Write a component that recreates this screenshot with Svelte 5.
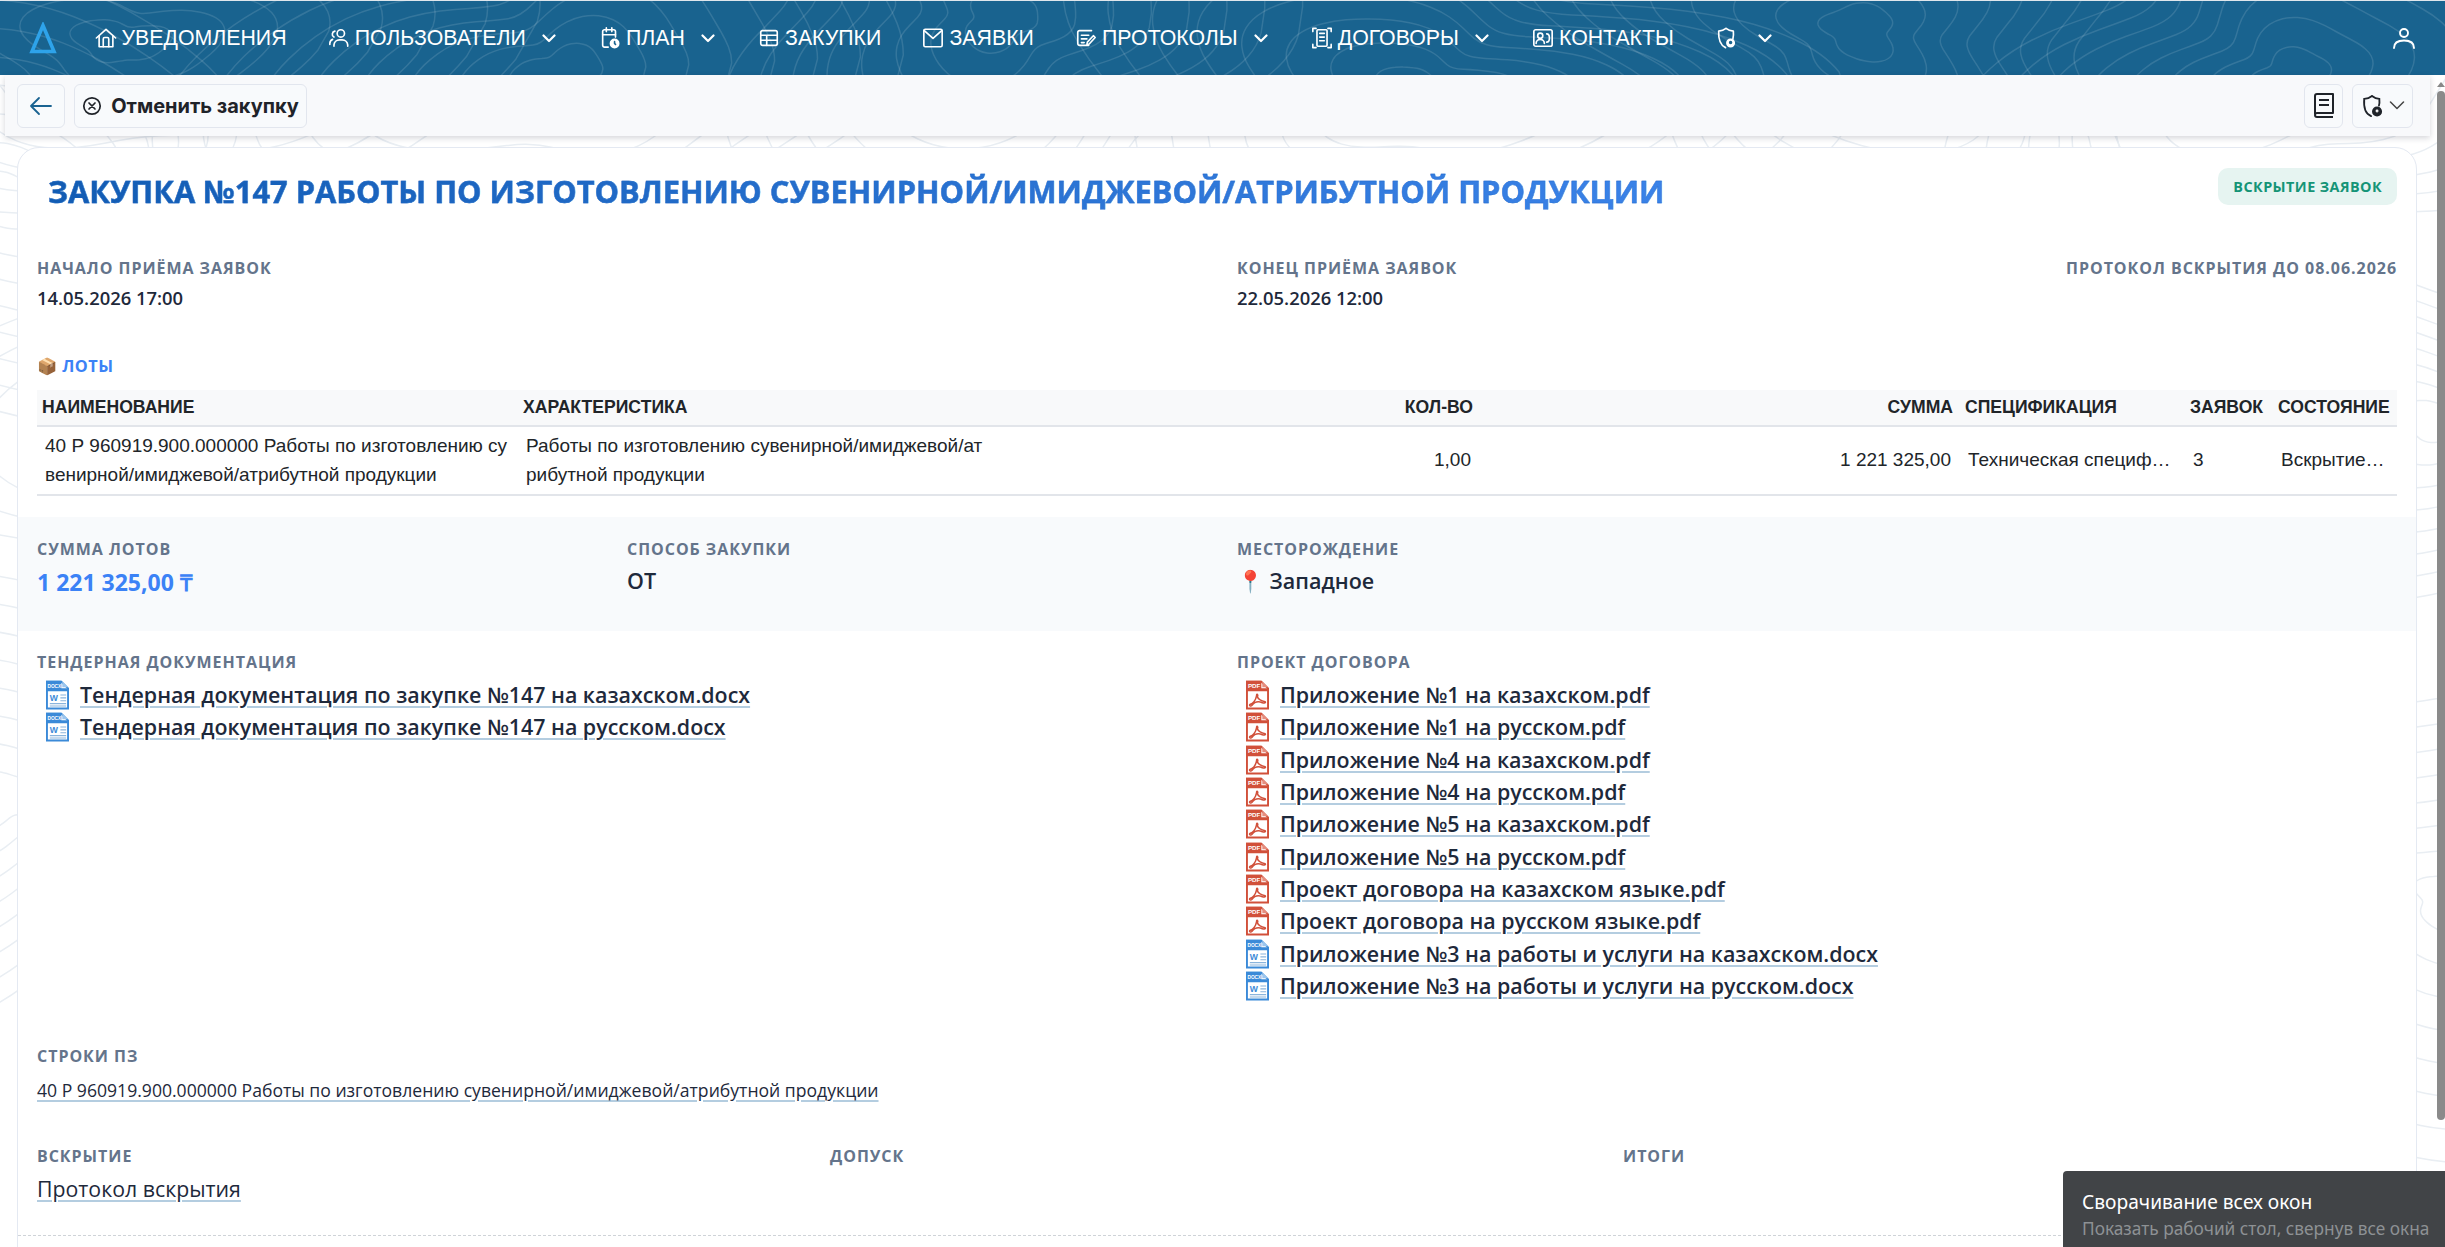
<script>
	// contour lines behind the navbar and the page
	function ring(cx, cy, r, seed) {
		const pts = [];
		for (let i = 0; i < 40; i++) {
			const a = (i / 40) * Math.PI * 2;
			const k = 1 + 0.22 * Math.sin(2 * a + seed) + 0.14 * Math.sin(3 * a + seed * 2) + 0.07 * Math.sin(5 * a + seed * 3);
			pts.push([cx + Math.cos(a) * r * k * 1.35, cy + Math.sin(a) * r * k * 0.8]);
		}
		let d = '';
		pts.forEach((p, i) => {
			const n = pts[(i + 1) % pts.length];
			const mid = [(p[0] + n[0]) / 2, (p[1] + n[1]) / 2];
			d += i === 0 ? `M${mid[0].toFixed(1)} ${mid[1].toFixed(1)}` : `Q${p[0].toFixed(1)} ${p[1].toFixed(1)} ${mid[0].toFixed(1)} ${mid[1].toFixed(1)}`;
		});
		return d + 'Z';
	}

	const hills = [
		[120, 40, 1.2], [560, 70, 2.6], [1000, 20, 4.1], [1420, 90, 0.7], [1860, 30, 5.2], [2290, 75, 3.3],
		[300, 420, 2.1], [2440, 420, 1.5], [0, 800, 3.7], [2450, 900, 4.6], [0, 200, 5.5]
	];
	const contours = [];
	for (const [x, y, s] of hills) {
		for (let r = 30; r < 260; r += 30) contours.push(ring(x, y, r, s));
	}

	const navItems = [
		{ icon: 'home', label: 'Уведомления' },
		{ icon: 'users', label: 'Пользователи', more: true },
		{ icon: 'plan', label: 'План', more: true },
		{ icon: 'table', label: 'Закупки' },
		{ icon: 'mail', label: 'Заявки' },
		{ icon: 'forms', label: 'Протоколы', more: true },
		{ icon: 'scan', label: 'Договоры', more: true },
		{ icon: 'contact', label: 'Контакты' },
		{ icon: 'shield', label: '', more: true }
	];

	const lotColumns = [
		{ label: 'Наименование', width: 481 },
		{ label: 'Характеристика', width: 476 },
		{ label: 'Кол-во', width: 486, right: true },
		{ label: 'Сумма', width: 480, right: true },
		{ label: 'Спецификация', width: 225 },
		{ label: 'Заявок', width: 88 },
		{ label: 'Состояние', width: 124 }
	];
	const lotCells = [
		'40 Р 960919.900.000000 Работы по изготовлению сувенирной/имиджевой/атрибутной продукции',
		'Работы по изготовлению сувенирной/имиджевой/атрибутной продукции',
		'1,00',
		'1 221 325,00',
		'Техническая спецификация',
		'3',
		'Вскрытие заявок'
	];

	const tenderDocs = [
		{ type: 'doc', name: 'Тендерная документация по закупке №147 на казахском.docx' },
		{ type: 'doc', name: 'Тендерная документация по закупке №147 на русском.docx' }
	];
	const contractDocs = [
		{ type: 'pdf', name: 'Приложение №1 на казахском.pdf' },
		{ type: 'pdf', name: 'Приложение №1 на русском.pdf' },
		{ type: 'pdf', name: 'Приложение №4 на казахском.pdf' },
		{ type: 'pdf', name: 'Приложение №4 на русском.pdf' },
		{ type: 'pdf', name: 'Приложение №5 на казахском.pdf' },
		{ type: 'pdf', name: 'Приложение №5 на русском.pdf' },
		{ type: 'pdf', name: 'Проект договора на казахском языке.pdf' },
		{ type: 'pdf', name: 'Проект договора на русском языке.pdf' },
		{ type: 'doc', name: 'Приложение №3 на работы и услуги на казахском.docx' },
		{ type: 'doc', name: 'Приложение №3 на работы и услуги на русском.docx' }
	];
</script>

{#snippet topo()}
	<svg class="topo" width="2445" height="1247" viewBox="0 0 2445 1247" fill="none" aria-hidden="true">
		{#each contours as d}
			<path {d} />
		{/each}
	</svg>
{/snippet}

{#snippet chevron()}
	<svg class="chev" width="14" height="9" viewBox="0 0 14 9" fill="none"><path d="M1.5 1.5 7 7l5.5-5.5" stroke="currentColor" stroke-width="2.2" stroke-linecap="round" stroke-linejoin="round" /></svg>
{/snippet}

{#snippet navIcon(name)}
	<svg width="22" height="24" viewBox="0 0 24 24" fill="none" stroke="currentColor" stroke-width="1.8" stroke-linecap="round" stroke-linejoin="round">
		{#if name === 'home'}
			<path d="M1.5 12 12 2.5 22.5 12" /><path d="M4.5 10v11.500h15V10" /><path d="M9 21.500v-8.500a1.500 1.500 0 0 1 1.500-1.500h3A1.500 1.500 0 0 1 15 13v8.500" />
		{:else if name === 'users'}
			<circle cx="14" cy="7" r="4" /><path d="M6.500 21v-1.500A6 6 0 0 1 12.500 14h3a6 6 0 0 1 6 5.500V21" /><path d="M7.500 4.500a3.500 3.500 0 0 0-1 6.500" /><path d="M2 19v-1a5 5 0 0 1 3-4.500" />
		{:else if name === 'plan'}
			<path d="M10 22H6a2 2 0 0 1-2-2V5a2 2 0 0 1 2-2h10a2 2 0 0 1 2 2v6" /><path d="M8 1v4M14 1v4M4 8.500h14" /><circle cx="17" cy="18" r="4.500" fill="currentColor" /><path d="M17 16v2l1 1" stroke="#19638f" />
		{:else if name === 'table'}
			<rect x="3" y="4" width="18" height="16" rx="2" /><path d="M3 9h18M3 14.500h18M9.500 9v11" />
		{:else if name === 'mail'}
			<rect x="2" y="2.500" width="20" height="19" rx="1.500" /><path d="m2.500 4 9.500 8.500L21.500 4" />
		{:else if name === 'forms'}
			<path d="M15 20H5a2 2 0 0 1-2-2V6a2 2 0 0 1 2-2h13" /><path d="M7 9h8M7 13h6M7 17h3" /><path d="m13 19 .5-2.500L20 9.500l2 2-6.500 7z" />
		{:else if name === 'scan'}
			<path d="M2 5V1.500h3.500M18.500 1.500H22V5M22 19v3.500h-3.500M5.500 22.500H2V19" /><rect x="6.500" y="3" width="11" height="18" rx="1" /><path d="M9.500 7h5M9.500 11h5M9.500 15h5" />
		{:else if name === 'contact'}
			<rect x="2" y="3" width="20" height="18" rx="2" /><circle cx="9" cy="9.500" r="2.800" /><path d="M4.500 18a4.500 4.500 0 0 1 9 0" /><path d="M16 7.500c2 0 3 1.500 3 4.500s-1 4.500-3 4.500" />
		{:else if name === 'shield'}
			<path d="M12 1.500c2.500 2 5 2.800 8 3 .4 3.500.2 6-.5 8.500M11.500 22.500C7 20.500 3.500 16 4 4.500c3-.2 5.500-1 8-3" /><circle cx="17" cy="17.500" r="4" fill="currentColor" /><circle cx="17" cy="17" r="1" stroke="#19638f" />
		{/if}
	</svg>
{/snippet}

{#snippet fileIcon(type)}
	{#if type === 'pdf'}
		<svg class="file" width="23" height="30" viewBox="0 0 24 30">
			<path d="M1 1h15l7 7v21H1z" fill="#fff" stroke="#d1503a" stroke-width="2" />
			<path d="M0 0h16v8h8v3H0z" fill="#d1503a" />
			<path d="M17 1l6 6h-6z" fill="#e58e7e" />
			<text x="2" y="8" class="file-tag">PDF</text>
			<path d="M4 25c3-1 6-4 7-9 0-3 2-2 1 1 1 3 4 4 8 5 1 1-1 2-3 1-5-2-8-1-11 3-1 1-3 0-2-1z" fill="none" stroke="#d1503a" stroke-width="1.600" />
		</svg>
	{:else}
		<svg class="file" width="23" height="30" viewBox="0 0 24 30">
			<path d="M1 1h15l7 7v21H1z" fill="#fff" stroke="#3b8ad8" stroke-width="2" />
			<path d="M0 0h16v8h8v3H0z" fill="#3b8ad8" />
			<path d="M17 1l6 6h-6z" fill="#9cc6ee" />
			<text x="1.500" y="8" class="file-tag small">DOCX</text>
			<text x="4" y="21" class="file-w">W</text>
			<path d="M15 15h6M15 18h6M15 21h6M4 24h17M4 26.500h17" stroke="#8ab4dc" stroke-width="1.200" />
		</svg>
	{/if}
{/snippet}

{#snippet docList(docs)}
	<ul class="docs">
		{#each docs as doc}
			<li>
				{@render fileIcon(doc.type)}
				<a href="#top" class="doc-link">{doc.name}</a>
			</li>
		{/each}
	</ul>
{/snippet}

<div class="page">
	<div class="page-bg">{@render topo()}</div>

	<nav class="navbar">
		{@render topo()}
		<svg class="logo" width="28" height="32" viewBox="0 0 28 32" fill="none"><path d="M14 3.500 3 29.500h22z" stroke="#2ea3ea" stroke-width="3.600" stroke-linejoin="miter" /></svg>
		<ul class="nav-list">
			{#each navItems as item}
				<li class="nav-item" class:icon-only={!item.label}>
					{@render navIcon(item.icon)}
					{#if item.label}<span>{item.label}</span>{/if}
					{#if item.more}{@render chevron()}{/if}
				</li>
			{/each}
		</ul>
		<svg class="avatar" width="24" height="24" viewBox="0 0 24 24" fill="none" stroke="currentColor" stroke-width="1.900" stroke-linecap="round"><circle cx="12" cy="7" r="4" /><path d="M2 22c0-5 4-7.500 10-7.500S22 17 22 22" /></svg>
	</nav>

	<div class="toolbar">
		<button class="tool back" aria-label="Назад">
			<svg width="24" height="20" viewBox="0 0 24 20" fill="none" stroke="#1a6391" stroke-width="1.800" stroke-linecap="round" stroke-linejoin="round"><path d="M22 10H2M10 2l-8 8 8 8" /></svg>
		</button>
		<button class="tool cancel">
			<svg width="20" height="20" viewBox="0 0 20 20" fill="none" stroke="#1f2329" stroke-width="1.700" stroke-linecap="round"><circle cx="10" cy="10" r="8.200" /><path d="m7 7 6 6M13 7l-6 6" /></svg>
			Отменить закупку
		</button>
		<div class="spacer"></div>
		<button class="tool book" aria-label="Справка">
			<svg width="22" height="26" viewBox="0 0 22 26" fill="none" stroke="#1f2329" stroke-width="2" stroke-linejoin="round"><path d="M2 21V3a2 2 0 0 1 2-2h16v19H4a2 2 0 0 0-2 2 2 2 0 0 0 2 2h16" /><path d="M6 7h10M6 12h10" /></svg>
		</button>
		<button class="tool lang" aria-label="Роль">
			<svg width="22" height="26" viewBox="0 0 24 26" fill="none" stroke="#1f2329" stroke-width="2" stroke-linecap="round"><path d="M12 2c2.500 2 5 3 8 3.200.3 3 .2 5.300-.4 7.300M11 24C6 22 2.500 17 3.500 5.200c3-.2 6-1.200 8.500-3.200" /><circle cx="17.500" cy="19" r="4.500" fill="#1f2329" /><circle cx="17.500" cy="18.500" r="1" stroke="#fff" stroke-width="1.200" /></svg>
			<svg width="16" height="9" viewBox="0 0 16 9" fill="none" stroke="#444" stroke-width="1.500" stroke-linecap="round" stroke-linejoin="round"><path d="m1.500 1 6.500 6.500L14.500 1" /></svg>
		</button>
	</div>

	<main class="card">
		<header class="card-head">
			<h1>Закупка №147 Работы по изготовлению сувенирной/имиджевой/атрибутной продукции</h1>
			<span class="badge">Вскрытие заявок</span>
		</header>

		<section class="dates">
			<div>
				<div class="label">Начало приёма заявок</div>
				<div class="date">14.05.2026 17:00</div>
			</div>
			<div>
				<div class="label">Конец приёма заявок</div>
				<div class="date">22.05.2026 12:00</div>
			</div>
			<div class="label deadline">Протокол вскрытия до 08.06.2026</div>
		</section>

		<section class="lots">
			<div class="lots-title"><span class="emoji">📦</span> Лоты</div>
			<table>
				<colgroup>
					{#each lotColumns as col}
						<col style="width: {col.width}px" />
					{/each}
				</colgroup>
				<thead>
					<tr>
						{#each lotColumns as col}
							<th class:right={col.right}>{col.label}</th>
						{/each}
					</tr>
				</thead>
				<tbody>
					<tr>
						{#each lotCells as cell, i}
							<td class:right={lotColumns[i].right} class:wrap={i < 2}>{cell}</td>
						{/each}
					</tr>
				</tbody>
			</table>
		</section>

		<section class="summary">
			<div>
				<div class="label">Сумма лотов</div>
				<div class="total">1 221 325,00 ₸</div>
			</div>
			<div>
				<div class="label">Способ закупки</div>
				<div class="value">ОТ</div>
			</div>
			<div>
				<div class="label">Месторождение</div>
				<div class="value"><span class="emoji">📍</span> Западное</div>
			</div>
		</section>

		<section class="documents">
			<div>
				<div class="label">Тендерная документация</div>
				{@render docList(tenderDocs)}
			</div>
			<div>
				<div class="label">Проект договора</div>
				{@render docList(contractDocs)}
			</div>
		</section>

		<section class="pz">
			<div class="label">Строки ПЗ</div>
			<a href="#top" class="pz-link">40 Р 960919.900.000000 Работы по изготовлению сувенирной/имиджевой/атрибутной продукции</a>
		</section>

		<section class="stages">
			<div>
				<div class="label">Вскрытие</div>
				<a href="#top" class="stage-link">Протокол вскрытия</a>
			</div>
			<div class="label">Допуск</div>
			<div class="label">Итоги</div>
		</section>

		<div class="divider"></div>
	</main>

	<div class="scrollbar">
		<span class="arrow"></span>
		<span class="thumb"></span>
	</div>

	<div class="tooltip">
		<div class="tip-title">Сворачивание всех окон</div>
		<div class="tip-text">Показать рабочий стол, свернув все окна</div>
	</div>
</div>

<style>
	:global(body) {
		margin: 0;
		background: #fff;
	}

	.page {
		position: relative;
		height: 1247px;
		overflow: hidden;
		font-family: 'Open Sans', sans-serif;
		color: #1e293b;
	}

	.page-bg {
		position: absolute;
		inset: 0;
	}

	.page-bg :global(.topo path) {
		stroke: #e9eef3;
		stroke-width: 1.5;
	}

	.navbar {
		position: relative;
		height: 75px;
		box-sizing: border-box;
		display: flex;
		align-items: center;
		padding-left: 29px;
		background: #19638f;
		border-top: 1px solid #dfe6ec;
		color: #fff;
		overflow: hidden;
		font-family: 'Liberation Sans', sans-serif;
	}

	.topo {
		position: absolute;
		left: 0;
		top: 0;
	}

	.navbar :global(.topo path) {
		stroke: rgba(255, 255, 255, 0.12);
		stroke-width: 1.5;
	}

	.logo {
		position: relative;
		flex: none;
	}

	.nav-list {
		position: relative;
		display: flex;
		align-items: center;
		list-style: none;
		margin: 0 0 0 17px;
		padding: 0;
	}

	.nav-item {
		display: flex;
		align-items: center;
		gap: 5px;
		padding: 0 20.6px;
		font-size: 21.3px;
		text-transform: uppercase;
		white-space: nowrap;
	}

	.nav-item :global(.chev) {
		margin-left: 11px;
		margin-right: 2px;
	}

	.nav-item.icon-only :global(.chev) {
		margin-left: 16px;
	}

	.avatar {
		position: absolute;
		right: 29px;
		top: 25px;
	}

	.toolbar {
		position: relative;
		display: flex;
		align-items: center;
		gap: 9px;
		height: 61px;
		margin: 0 15px 0 5px;
		padding: 0 17px 0 12px;
		background: #f8f9fb;
		box-shadow: 0 2px 6px rgba(15, 23, 42, 0.18);
	}

	.spacer {
		flex: 1;
	}

	.tool {
		display: inline-flex;
		align-items: center;
		justify-content: center;
		gap: 9px;
		height: 44px;
		padding: 0;
		background: #f8fafc;
		border: 1px solid #e2e6ee;
		border-radius: 6px;
		font-family: Inter, sans-serif;
		font-size: 20px;
		font-weight: 700;
		color: #1f2329;
	}

	.back {
		width: 48px;
	}

	.cancel {
		width: 233px;
	}

	.book {
		width: 39px;
	}

	.lang {
		width: 61px;
		gap: 6px;
	}

	.card {
		position: relative;
		margin: 11px 28px 0 17px;
		background: #fff;
		border: 1px solid #e4e9f2;
		border-radius: 22px;
		height: 1200px;
	}

	.card-head {
		display: flex;
		justify-content: space-between;
		align-items: flex-start;
		box-sizing: border-box;
		padding: 20px 19px 0 30px;
		height: 80px;
	}

	h1 {
		margin: 0;
		font-size: 30.8px;
		line-height: 47px;
		font-weight: 700;
		text-transform: uppercase;
		white-space: nowrap;
		background: linear-gradient(90deg, #125cb3, #3a82e8);
		-webkit-background-clip: text;
		background-clip: text;
		color: transparent;
		-webkit-text-stroke: 0.4px rgba(25, 105, 200, 0.8);
	}

	.badge {
		display: flex;
		align-items: center;
		height: 37px;
		padding: 0 15px;
		background: #e6f4f1;
		border-radius: 10px;
		font-size: 14.4px;
		font-weight: 700;
		letter-spacing: 0.03em;
		color: #159477;
		text-transform: uppercase;
	}

	.label {
		font-size: 16px;
		line-height: 20px;
		font-weight: 700;
		letter-spacing: 0.06em;
		color: #64748b;
		text-transform: uppercase;
	}

	.dates {
		display: grid;
		grid-template-columns: 1200px 1fr auto;
		padding: 30px 19px 0;
	}

	.date {
		margin-top: 8px;
		font-size: 18.4px;
		line-height: 24px;
		font-weight: 600;
		color: #1e293b;
	}

	.lots {
		padding: 45px 19px 0;
	}

	.lots-title {
		font-size: 16.3px;
		line-height: 22px;
		font-weight: 700;
		letter-spacing: 0.03em;
		color: #3b82f6;
		text-transform: uppercase;
	}

	table {
		width: 2360px;
		margin-top: 13px;
		border-collapse: collapse;
		table-layout: fixed;
		font-family: 'Liberation Sans', sans-serif;
	}

	th {
		height: 35px;
		padding: 0 5px;
		background: #f8f9fa;
		border-bottom: 2px solid #e2e5ea;
		font-size: 17.6px;
		font-weight: 700;
		color: #212529;
		text-align: left;
		text-transform: uppercase;
		white-space: nowrap;
		overflow: hidden;
	}

	td {
		padding: 2px 8px 5px;
		border-bottom: 2px solid #e2e5ea;
		font-size: 19px;
		line-height: 29px;
		color: #212529;
		white-space: nowrap;
		overflow: hidden;
		text-overflow: ellipsis;
	}

	td.wrap {
		padding-top: 4px;
		white-space: normal;
		word-break: break-all;
	}

	th.right {
		padding-right: 7px;
		text-align: right;
	}

	td.right {
		padding-right: 9px;
		text-align: right;
	}

	.summary {
		display: grid;
		grid-template-columns: 590px 610px 1fr;
		height: 114px;
		box-sizing: border-box;
		margin-top: 21px;
		padding: 22px 19px 0;
		background: #f8fafc;
	}

	.total {
		margin-top: 8px;
		font-size: 23px;
		line-height: 30px;
		font-weight: 700;
		color: #3b82f6;
	}

	.value {
		margin-top: 8px;
		font-size: 21.5px;
		line-height: 28px;
		font-weight: 600;
		color: #1e293b;
	}

	.documents {
		display: grid;
		grid-template-columns: 1200px 1fr;
		padding: 21px 19px 0;
		height: 415px;
		box-sizing: border-box;
	}

	.docs {
		list-style: none;
		margin: 7px 0 0;
		padding: 0;
	}

	.docs li {
		display: flex;
		align-items: center;
		height: 32.3px;
		padding-left: 9px;
		gap: 11px;
	}

	.file {
		flex: none;
	}

	.file-tag {
		font-family: 'Liberation Sans', sans-serif;
		font-size: 6.5px;
		font-weight: 700;
		fill: #fff;
	}

	.file-tag.small {
		font-size: 5px;
	}

	.file-w {
		font-family: 'Liberation Sans', sans-serif;
		font-size: 9px;
		font-weight: 700;
		fill: #3b8ad8;
	}

	.doc-link {
		font-size: 21.4px;
		line-height: 28px;
		font-weight: 600;
		color: #1e293b;
		text-decoration: underline;
		text-decoration-color: #b4cde0;
		text-decoration-thickness: 2px;
		text-underline-offset: 3px;
	}

	.pz {
		padding: 0 19px;
	}

	.pz-link {
		display: inline-block;
		margin-top: 13px;
		font-size: 17.6px;
		line-height: 22px;
		color: #1e293b;
		text-decoration: underline;
		text-decoration-color: #b4cde0;
		text-decoration-thickness: 2px;
		text-underline-offset: 3px;
	}

	.stages {
		display: grid;
		grid-template-columns: 793px 793px 1fr;
		padding: 44px 19px 0;
	}

	.stage-link {
		display: inline-block;
		margin-top: 9px;
		font-size: 21.3px;
		line-height: 28px;
		color: #1e293b;
		text-decoration: underline;
		text-decoration-color: #b4cde0;
		text-decoration-thickness: 2px;
		text-underline-offset: 3px;
	}

	.divider {
		margin-top: 32px;
		border-top: 1px dashed #cfd3d8;
	}

	.scrollbar {
		position: absolute;
		right: 0;
		top: 76px;
		width: 8px;
		height: 1171px;
	}

	.arrow {
		position: absolute;
		left: 0;
		top: 6px;
		border: 4px solid transparent;
		border-top: 0;
		border-bottom: 5px solid #888;
	}

	.thumb {
		position: absolute;
		left: 0;
		top: 15px;
		width: 8px;
		height: 1029px;
		border-radius: 4px;
		background: #8a8a8a;
	}

	.tooltip {
		position: absolute;
		right: 0;
		bottom: 0;
		width: 382px;
		height: 76px;
		box-sizing: border-box;
		padding: 17px 0 0 19px;
		background: #414447;
		border-top-left-radius: 4px;
		font-family: 'Noto Sans', sans-serif;
	}

	.tip-title {
		font-size: 19.2px;
		line-height: 28px;
		color: #fff;
	}

	.tip-text {
		font-size: 17.3px;
		line-height: 26px;
		color: #8d9194;
		white-space: nowrap;
	}
</style>
